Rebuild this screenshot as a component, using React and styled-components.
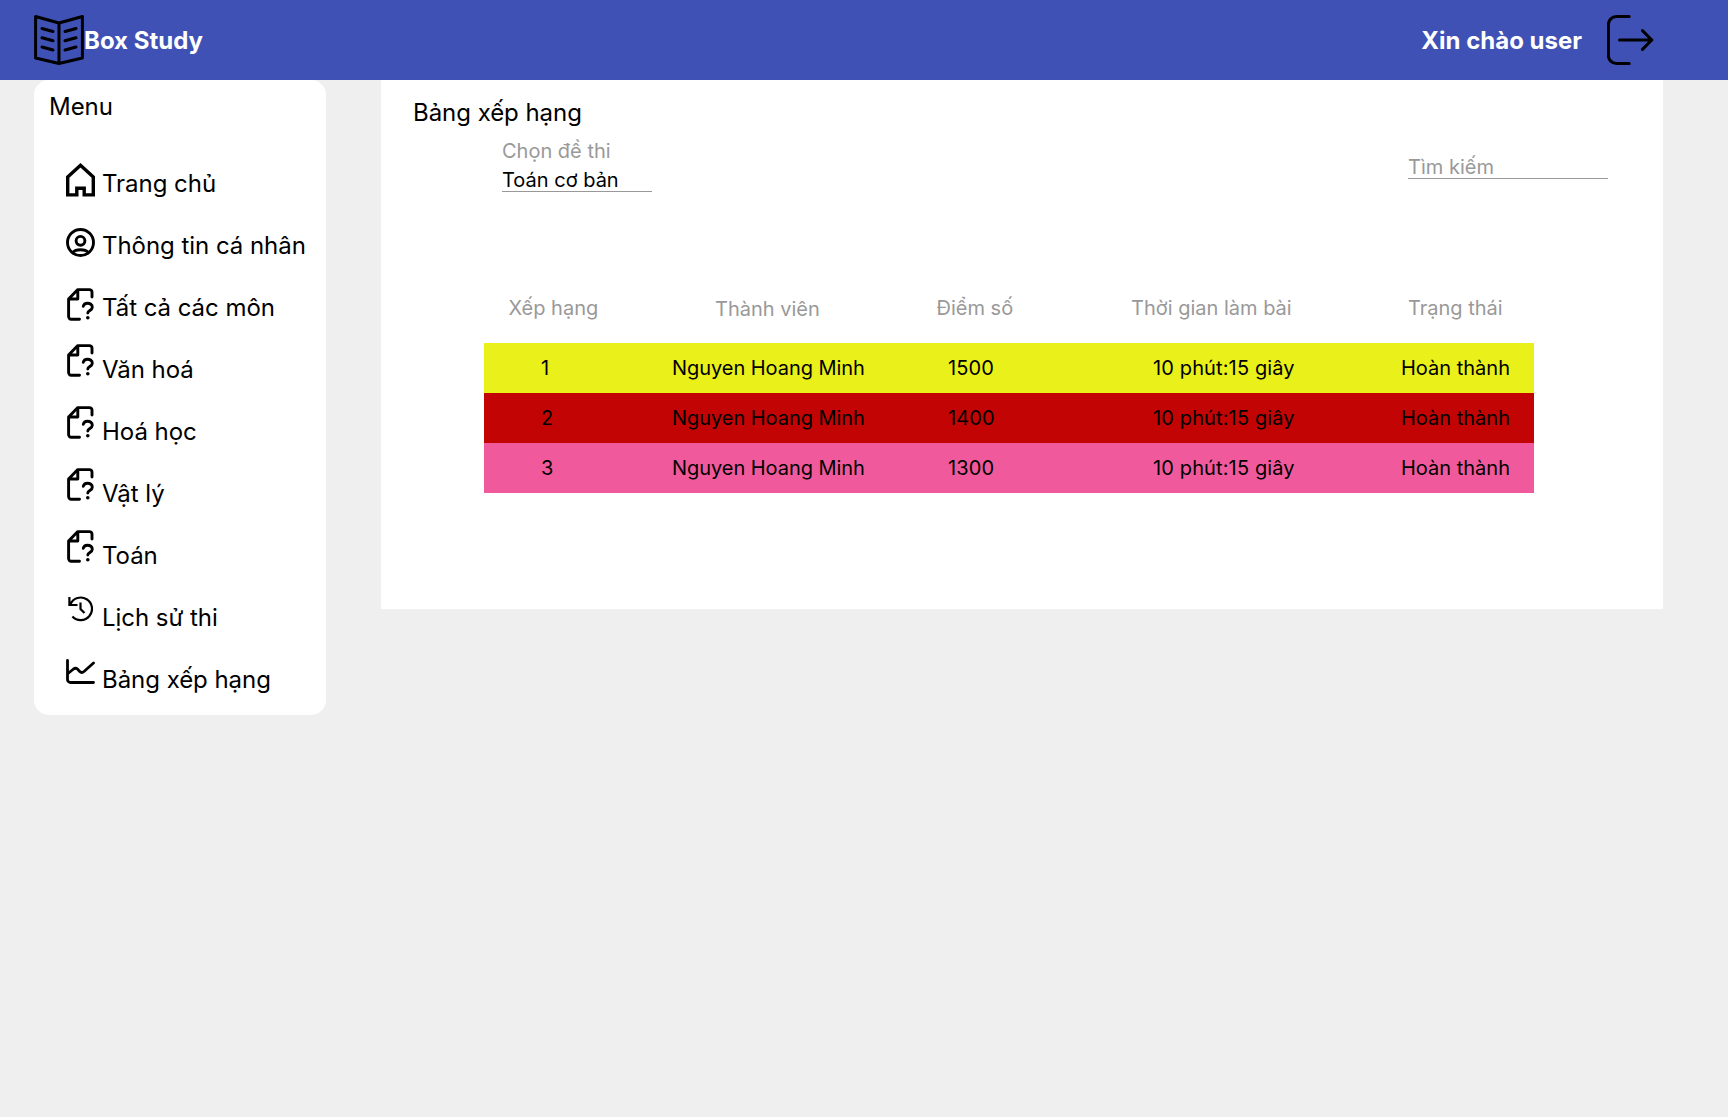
import React from "react";
import styled, { createGlobalStyle } from "styled-components";

const GlobalStyle = createGlobalStyle`
  *, *::before, *::after { box-sizing: border-box; }
  body {
    margin: 0;
    background: #efefef;
    color: #000;
    font-family: Inter, "Liberation Sans", sans-serif;
  }
`;

const Page = styled.div`
  min-height: 1117px;
  display: flex;
  flex-direction: column;
`;

const Header = styled.header`
  height: 80px;
  padding: 0 74px 0 34px;
  display: flex;
  align-items: center;
  justify-content: space-between;
  background: #3f51b5;
  color: #fff;
  font-size: 24px;
  font-weight: 700;
  line-height: 29px;
`;

const Brand = styled.div`
  display: flex;
  align-items: center;
`;

const Account = styled.div`
  display: flex;
  align-items: center;
  gap: 25px;
`;

const Icon = styled.svg`
  display: block;
  flex: none;
  width: ${(p) => p.$w}px;
  height: ${(p) => p.$h}px;
  color: #000;
  fill: none;
  stroke: currentColor;
`;

const Body = styled.div`
  display: flex;
  align-items: flex-start;
  gap: 55px;
  padding-left: 34px;
`;

const Sidebar = styled.aside`
  width: 292px;
  height: 635px;
  padding: 12px 15px;
  border-radius: 15px;
  background: #fff;
  font-size: 24px;
  line-height: 29px;
  letter-spacing: -0.04px;
`;

const MenuTitle = styled.div`
  height: 61px;
`;

const MenuList = styled.nav`
  display: flex;
  flex-direction: column;
  padding-left: 17px;
`;

const MenuItem = styled.a`
  height: 62px;
  display: flex;
  align-items: flex-start;
`;

const MenuIcon = styled.span`
  width: 29px;
  height: 34px;
  margin-right: 7px;
  padding-top: ${(p) => p.$top}px;
  display: flex;
  justify-content: center;
`;

const MenuLabel = styled.span`
  padding-top: 16px;
  white-space: nowrap;
`;

const Panel = styled.main`
  width: 1282px;
  height: 529px;
  padding: 18px 0 0 32px;
  background: #fff;
  font-size: 20px;
  line-height: 24px;
`;

const Title = styled.h1`
  margin: 0;
  font-size: 24px;
  font-weight: 400;
  line-height: 29px;
  letter-spacing: -0.04px;
`;

const Filters = styled.div`
  display: flex;
  justify-content: space-between;
  padding: 12px 55px 0 89px;
`;

const ExamField = styled.label`
  width: 150px;
  height: 53px;
  display: flex;
  flex-direction: column;
  gap: 5px;
  border-bottom: 1px solid #999;
`;

const SearchField = styled.label`
  width: 200px;
  height: 24px;
  margin-top: 16px;
  border-bottom: 1px solid #999;
  color: #999;
`;

const Muted = styled.span`
  color: #999;
`;

const Table = styled.div`
  width: 1050px;
  margin: 104px 0 0 71px;
`;

const Row = styled.div`
  height: 50px;
  display: grid;
  grid-template-columns: 188px 265px 216px 248px 133px;
  align-items: center;
  background: ${(p) => p.$bg};
`;

const HeadRow = styled(Row)`
  height: 47px;
  grid-template-columns: 188px 264.5px 194.5px 269px 134px;
  align-items: start;
  color: #999;
`;

const Cell = styled.div`
  padding-left: ${(p) => p.$pad || 0}px;
  padding-top: ${(p) => p.$drop || 0}px;
  letter-spacing: ${(p) => p.$track || 0}px;
  white-space: nowrap;
`;

const BookIcon = () => (
  <Icon $w={50} $h={50} viewBox="0 0 50 50" strokeWidth="3" strokeLinecap="round" strokeLinejoin="round">
    <path d="M25 8 48.4 1.5V43L25 48.5 1.6 43V1.5ZM25 8V48.5" />
    <path d="M8 13.5 19 16.5M8 22.8 19 25.8M8 32 19 35M42 13.5 31 16.5M42 22.8 31 25.8M42 32 31 35" />
  </Icon>
);

const LogoutIcon = () => (
  <Icon $w={47} $h={50} viewBox="0 0 47 50" strokeWidth="3" strokeLinecap="round" strokeLinejoin="round">
    <path d="M22.2 1.5H9.4A8 8 0 0 0 1.4 9.5V40.5A8 8 0 0 0 9.4 48.5H22.2M12.5 25H44.8M35.5 15.6 44.8 25 35.5 34.4" />
  </Icon>
);

const HomeIcon = () => (
  <Icon $w={29} $h={34} viewBox="0 0 29 34" strokeWidth="3.4">
    <path d="M1.7 31.9V14L14.5 2.3 27.3 14V31.9H18.2V25.2H10.8V31.9Z" />
  </Icon>
);

const UserIcon = () => (
  <Icon $w={29} $h={29} viewBox="0 0 29 29" strokeWidth="2.9">
    <circle cx="14.5" cy="14.5" r="13" />
    <circle cx="14.5" cy="12.8" r="4.4" />
    <path d="M6.5 24.6C8.6 22.2 11.5 21.7 14.5 21.7S20.4 22.2 22.5 24.6" />
  </Icon>
);

const QuizIcon = () => (
  <Icon $w={27} $h={33} viewBox="0 0 27 33" strokeWidth="2.9" strokeLinecap="round" strokeLinejoin="round">
    <path d="M12.5 31.2H4.2A2.6 2.6 0 0 1 1.6 28.6V11L10.8 1.6H22.4A2.6 2.6 0 0 1 25 4.2V9M1.6 11H10.8V1.6" />
    <path d="M16.3 18.3C16.8 16 18.5 15.2 20.5 15.2C23 15.2 25.3 16.7 25.3 19.2C25.3 22.3 20.8 22.5 20.8 25" />
    <circle cx="20.8" cy="29.8" r="1.8" fill="currentColor" stroke="none" />
  </Icon>
);

const HistoryIcon = () => (
  <Icon $w={25} $h={26} viewBox="0 0 25 26" strokeWidth="2.2">
    <path d="M1.4 1V9H9.5M2.4 8.2A11.3 11.3 0 1 1 4.4 20.5M12.5 6.5V13L16.5 17" />
  </Icon>
);

const ChartIcon = () => (
  <Icon $w={29} $h={25} viewBox="0 0 29 25" strokeWidth="2.8" strokeLinecap="round" strokeLinejoin="round">
    <path d="M1.5 1.5V20.5A3 3 0 0 0 4.5 23.5H27.5M2 14.5 7.5 10C9 9 10.2 9 11.5 10L13.5 12.3C15 13.8 16.5 13.8 18 12.5L27.5 4" />
  </Icon>
);

const menu = [
  { label: "Trang chủ", icon: HomeIcon, top: 10 },
  { label: "Thông tin cá nhân", icon: UserIcon, top: 13 },
  { label: "Tất cả các môn", icon: QuizIcon, top: 11 },
  { label: "Văn hoá", icon: QuizIcon, top: 5 },
  { label: "Hoá học", icon: QuizIcon, top: 5 },
  { label: "Vật lý", icon: QuizIcon, top: 5 },
  { label: "Toán", icon: QuizIcon, top: 5 },
  { label: "Lịch sử thi", icon: HistoryIcon, top: 9 },
  { label: "Bảng xếp hạng", icon: ChartIcon, top: 10 },
];

const rows = [
  { rank: 1, score: 1500, bg: "#eaf01a" },
  { rank: 2, score: 1400, bg: "#c20404" },
  { rank: 3, score: 1300, bg: "#f05a9d" },
];

export default function App() {
  return (
    <Page>
      <GlobalStyle />
      <Header>
        <Brand>
          <BookIcon />
          <span>Box Study</span>
        </Brand>
        <Account>
          <span>Xin chào user</span>
          <LogoutIcon />
        </Account>
      </Header>
      <Body>
        <Sidebar>
          <MenuTitle>Menu</MenuTitle>
          <MenuList>
            {menu.map(({ label, icon: Glyph, top }) => (
              <MenuItem key={label}>
                <MenuIcon $top={top}>
                  <Glyph />
                </MenuIcon>
                <MenuLabel>{label}</MenuLabel>
              </MenuItem>
            ))}
          </MenuList>
        </Sidebar>
        <Panel>
          <Title>Bảng xếp hạng</Title>
          <Filters>
            <ExamField>
              <Muted>Chọn đề thi</Muted>
              <span>Toán cơ bản</span>
            </ExamField>
            <SearchField>Tìm kiếm</SearchField>
          </Filters>
          <Table>
            <HeadRow>
              <Cell $pad={24.5}>Xếp hạng</Cell>
              <Cell $pad={43} $drop={1}>Thành viên</Cell>
              <Cell>Điểm số</Cell>
              <Cell>Thời gian làm bài</Cell>
              <Cell $pad={8}>Trạng thái</Cell>
            </HeadRow>
            {rows.map((r) => (
              <Row key={r.rank} $bg={r.bg}>
                <Cell $pad={57}>{r.rank}</Cell>
                <Cell $track={-0.05}>Nguyen Hoang Minh</Cell>
                <Cell $pad={11} $track={0.1}>{r.score}</Cell>
                <Cell $track={0.13}>10 phút:15 giây</Cell>
                <Cell>Hoàn thành</Cell>
              </Row>
            ))}
          </Table>
        </Panel>
      </Body>
    </Page>
  );
}
